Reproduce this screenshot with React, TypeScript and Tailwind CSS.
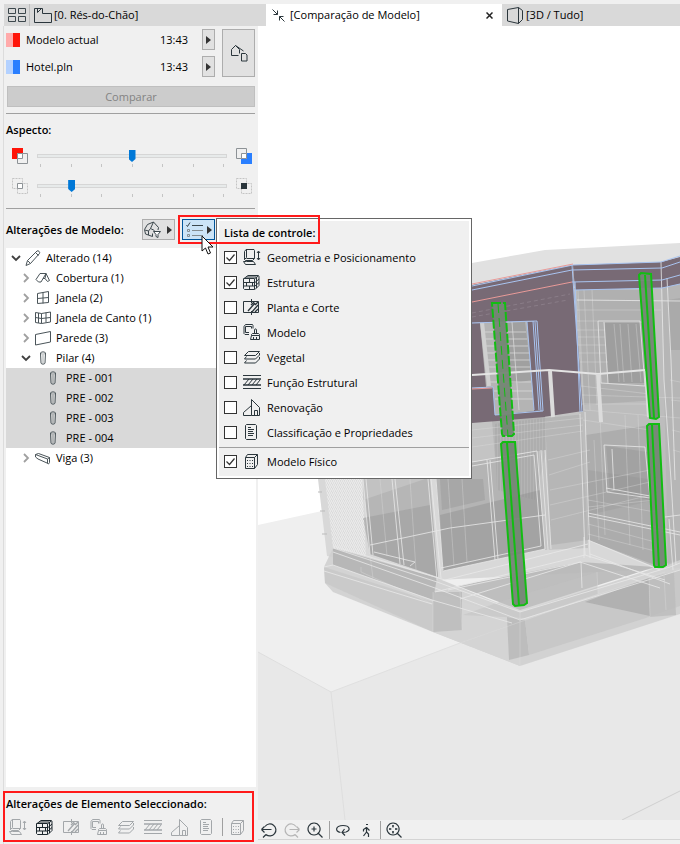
import React, { useState } from "react";
import clsx from "clsx";

type IconProps = { name: string; className?: string };

const icons: Record<string, React.ReactNode> = {
  geometry: (
    <>
      <path d="M1.5 2.5 3 .5h8l.5 1v8l-2 2h-7l-1-1zM3.5.5v8l-2 2M3.5 9.5h8M3.5 12.5h-3l2 3h10l-2-3z" />
      <path d="M15.5 2.5v8M14 4l1.5-2L17 4M14 9l1.5 2L17 9" />
    </>
  ),
  structure: (
    <>
      <path d="M.5 4.500h11v11H1.500l-1-1zM1 4.500l4-3h10l1 1v9l-4 4M12 4.500l4-3" />
      <path d="M1 8.500h11l4-3.500M1 12h11l4-3.500M6.500 4.500v4M3.500 8.500V12M9.500 8.500V12M6.500 12v3.500M3 3h10.500v11" />
    </>
  ),
  plan: (
    <>
      <path d="M8 2.500H.5v11H8M8.500 0v4M8.500 12v4M8 2.500h7.500v11H8" />
      <path d="M5 12l7-8M8 6l3-3M9 13l6-7M12 13l3-3M12 6l3-3" strokeWidth="1.300" />
    </>
  ),
  model: (
    <>
      <path d="M1 2.500 2.500.5h7l.5 1v3M2.500 2.500h6v2M1 2.500v7l1 1h4M2.500 2.500v6H6" />
      <path d="M11.500 9.500V6c0-1.500 2-1.500 2 0v3.500M8.500 11.500v-1l1-1h6l1 1v1zM8.500 11.500l-1 4h9v-4M10.500 13v2.500M13.500 13v2.500" />
    </>
  ),
  layers: (
    <path d="M5.500 2.500h11l-4 4H1.500zM16.500 4v2l-4 4H1.500l2-2.500M16.500 8v2l-4 4H1.500l2-2.500" />
  ),
  hatch: (
    <>
      <path d="M0 1.500h18M0 14.500h18" />
      <path d="M0 5h18M0 11h18" strokeWidth="1.500" />
      <path d="M1 11l5-6M5 11l5-6M9 11l5-6M13 11l4-5" />
    </>
  ),
  renovation: (
    <path d="M8.500 16.500V.5l8 8v8zM8.500 6.500l-8 7v3h8M11.500 16.500v-5h3v5" />
  ),
  document: (
    <path d="M3.500.5h9l1 1v13l-1 1h-9l-1-1v-13zM5 3.500h3M5 5.500h6M5 7.500h5M5 9.500h6M5 11.500h5" />
  ),
  physical: (
    <>
      <path d="M2.500 4.500h9v11h-9zM2.500 4.500l2-3h10l-3 3M14.500 1.500v10l-3 4" />
      <path d="M4 7.500h7M4 10.500h7M4 13.500h7" strokeDasharray="1 1.500" />
    </>
  ),
  pencil: (
    <path d="M1 15.500l1.500-5L12 1c1-1 3.500 1 2.500 2.500L5.500 13.500zM2.500 10.500l3 3M10.500 2.500l3 3" />
  ),
  roof: (
    <path d="M1 9.500l4-6h6L6 12H3.500zM11 3.500l3.500 7-2 1L10 8.500H8M11 3.500l-1 5" />
  ),
  window: <path d="M2.500 3.500l11-2v11l-11 1zM8 2.500v11M2.500 8.500l11-1" />,
  corner: (
    <path d="M.5 2.500l6 1v10l-6-1zM6.500 3.500l9-1.500v10l-9 1.500M3.500 3v10M11 2.500v10M.5 7.500l6 1 9-1" />
  ),
  wall: <path d="M.5 4.500l15-3v10.500l-15 3z" />,
  column: (
    <>
      <path d="M5.500 3c0-1.500 5-1.500 5 0L10 13c0 1.500-4 1.500-4 0z" />
      <path d="M5.500 3c0 1.500 5 1.500 5 0M8 5v8" strokeOpacity=".5" />
    </>
  ),
  beam: (
    <path d="M.5 4.500l3-1 11 4v5l-1 1.500-1.500-1-9-4L.5 7zM.5 4.500l12 4.500 2-1.500M12.500 9v4" />
  ),
};

const Icon = ({ name, className }: IconProps) => (
  <svg
    viewBox="0 0 18 17"
    fill="none"
    stroke="currentColor"
    strokeWidth="1"
    aria-hidden="true"
    className={clsx("h-[17px] w-[18px] shrink-0", className)}
  >
    {icons[name]}
  </svg>
);

const Arrow = () => (
  <svg viewBox="0 0 5 8" className="h-2 w-[5px]" aria-hidden="true">
    <path d="M0 0l5 4-5 4z" fill="#333" />
  </svg>
);

const checks = [
  { label: "Geometria e Posicionamento", icon: "geometry", on: true },
  { label: "Estrutura", icon: "structure", on: true },
  { label: "Planta e Corte", icon: "plan", on: false },
  { label: "Modelo", icon: "model", on: false },
  { label: "Vegetal", icon: "layers", on: false },
  { label: "Função Estrutural", icon: "hatch", on: false },
  { label: "Renovação", icon: "renovation", on: false },
  { label: "Classificação e Propriedades", icon: "document", on: false },
];

const tree = [
  { label: "Alterado (14)", icon: "pencil", level: 0, open: true },
  { label: "Cobertura (1)", icon: "roof", level: 1, open: false },
  { label: "Janela (2)", icon: "window", level: 1, open: false },
  { label: "Janela de Canto (1)", icon: "corner", level: 1, open: false },
  { label: "Parede (3)", icon: "wall", level: 1, open: false },
  { label: "Pilar (4)", icon: "column", level: 1, open: true },
  { label: "PRE - 001", icon: "column", level: 2 },
  { label: "PRE - 002", icon: "column", level: 2 },
  { label: "PRE - 003", icon: "column", level: 2 },
  { label: "PRE - 004", icon: "column", level: 2 },
  { label: "Viga (3)", icon: "beam", level: 1, open: false },
];

const CheckRow = ({ label, icon, on }: { label: string; icon: string; on: boolean }) => {
  const [checked, setChecked] = useState(on);
  return (
    <label className="flex h-[25px] items-center pl-[5px]">
      <span className="relative flex h-[13px] w-[13px]">
        <input
          type="checkbox"
          checked={checked}
          onChange={() => setChecked(!checked)}
          className="h-[13px] w-[13px] appearance-none border border-[#333] bg-white"
        />
        {checked && (
          <svg viewBox="0 0 13 13" className="pointer-events-none absolute inset-0" aria-hidden="true">
            <path d="M2.500 6.500l3 3 5-6" fill="none" stroke="#333" strokeWidth="1.200" />
          </svg>
        )}
      </span>
      <Icon name={icon} className="ml-[6px] text-[#2b363c]" />
      <span className="ml-[6px] whitespace-nowrap">{label}</span>
    </label>
  );
};

const ControlMenu = () => (
  <div className="absolute top-[-1px] left-[34px] z-10 w-[256px] border border-[#666] bg-white p-[2px] text-black">
    <div className="bg-[#f0f0f0] pb-[2px]">
      <h3 className="flex h-6 items-center pl-[5px] font-semibold">Lista de controle:</h3>
      {checks.map((c) => (
        <CheckRow key={c.label} {...c} />
      ))}
      <hr className="mt-[2px] mb-[1px] border-[#a0a0a0]" />
      <CheckRow label="Modelo Físico" icon="physical" on={true} />
    </div>
  </div>
);

const Slider = ({ label, start }: { label: string; start: number }) => (
  <div className="flex-1">
    <input
      type="range"
      aria-label={label}
      min={0}
      max={6}
      defaultValue={start}
      className="block h-3 w-full appearance-none bg-transparent [&::-webkit-slider-runnable-track]:h-1 [&::-webkit-slider-runnable-track]:border [&::-webkit-slider-runnable-track]:border-[#d6d6d6] [&::-webkit-slider-runnable-track]:bg-[#e7eaea] [&::-webkit-slider-thumb]:-mt-[5px] [&::-webkit-slider-thumb]:h-3 [&::-webkit-slider-thumb]:w-[7px] [&::-webkit-slider-thumb]:appearance-none [&::-webkit-slider-thumb]:bg-[#0078d7] [&::-webkit-slider-thumb]:[clip-path:polygon(0_0,100%_0,100%_75%,50%_100%,0_75%)]"
    />
    <div className="mt-[2px] flex justify-between px-[3px]">
      {[0, 1, 2, 3, 4, 5, 6].map((t) => (
        <span key={t} className="h-[3px] w-px bg-[#c4c4c4]" />
      ))}
    </div>
  </div>
);

const Sources = () => (
  <div className="flex gap-[7px] pr-px pl-0">
    <div className="flex flex-1 flex-col gap-[6px]">
      {[
        { name: "Modelo actual", light: "bg-[#ffaaaa]", dark: "bg-[#ff1408]" },
        { name: "Hotel.pln", light: "bg-[#b3d1ff]", dark: "bg-[#2a7fff]" },
      ].map((s) => (
        <div key={s.name} className="flex h-[21px] items-center">
          <span className={clsx("h-[14px] w-[7px]", s.light)} />
          <span className={clsx("h-[14px] w-[7px]", s.dark)} />
          <span className="ml-[6px] flex-1">{s.name}</span>
          <span className="mr-[14px]">13:43</span>
          <button
            aria-label={s.name}
            className="flex h-[21px] w-[13px] items-center justify-center border border-[#adadad] bg-[#e1e1e1]"
          >
            <Arrow />
          </button>
        </div>
      ))}
    </div>
    <button
      aria-label="Modelos"
      className="flex w-[33px] items-center justify-center border border-[#adadad] bg-[#e1e1e1]"
    >
      <svg viewBox="0 0 18 18" className="h-[18px] w-[18px]" fill="none" stroke="#2b363c">
        <path d="M8.500 11.500h-7v-6l4-4 4 4v4M5.500 1.500l8 5.500M11.500 9.500h4l1.500 1.500v6h-5.500z" />
      </svg>
    </button>
  </div>
);

const Aspect = () => (
  <div className="px-[6px] pr-1">
    <div className="flex gap-[9px] pb-[13px]">
      <svg viewBox="0 0 16 16" className="-mt-[2px] h-4 w-4" aria-hidden="true">
        <path d="M0 0h11v11H0z" fill="#ff1408" />
        <path d="M5.500 5.500h10v10h-10z" fill="#f0f0f0" stroke="#8d9296" />
        <path d="M5.500 5.500h5v5h-5z" fill="#fff" stroke="#8d9296" />
      </svg>
      <Slider label="Cor" start={3} />
      <svg viewBox="0 0 16 16" className="-mt-[2px] h-4 w-4" aria-hidden="true">
        <path d="M5 5h11v11H5z" fill="#2a7fff" />
        <path d="M.5.5h10v10H.5z" fill="#f0f0f0" stroke="#8d9296" />
        <path d="M5.500 5.500h5v5h-5z" fill="#fff" stroke="#8d9296" />
      </svg>
    </div>
    <div className="flex gap-[9px]">
      <svg viewBox="0 0 16 16" className="-mt-[2px] h-4 w-4" fill="none" aria-hidden="true">
        <path d="M.5.5h10v10H.5zM5.500 5.500h10v10h-10z" stroke="#c4c4c4" strokeDasharray="2 1" />
        <path d="M5.500 5.500h5v5h-5z" stroke="#8d9296" fill="#fff" />
      </svg>
      <Slider label="Opacidade" start={1} />
      <svg viewBox="0 0 16 16" className="-mt-[2px] h-4 w-4" fill="none" aria-hidden="true">
        <path d="M.5.5h10v10H.5zM5.500 5.500h10v10h-10z" stroke="#c4c4c4" strokeDasharray="2 1" />
        <path d="M5 5h6v6H5z" fill="#2b363c" />
      </svg>
    </div>
  </div>
);

const Cursor = () => (
  <svg
    viewBox="0 0 13 20"
    className="pointer-events-none absolute top-[16px] left-[19px] z-30 h-5 w-[13px]"
    aria-hidden="true"
  >
    <path d="M1 1v15l3.500-3 2.500 6 2.500-1-2.500-6h5z" fill="#fff" stroke="#111" />
  </svg>
);

const ChangesHeader = () => (
  <div className="flex h-[21px] items-center">
    <h2 className="flex-1 font-semibold whitespace-nowrap">Alterações de Modelo:</h2>
    <button
      aria-label="Filtro"
      className="flex h-[21px] w-[33px] items-center justify-between border border-[#adadad] bg-[#e1e1e1] pr-[2px] pl-px"
    >
      <svg viewBox="0 0 18 18" className="h-[18px] w-[18px]" fill="none" stroke="#3c474c">
        <path d="M.5 8.500l3-5 6-2.500 5 5.500-.5 2.500M.5 8.500L1.500 13l7 2.500v-3M1 9l3.500 1 2-2.500L9.500 1M4.500 10v4M6.500 7.500l4 2" />
        <path d="M9.500 10.500h7l-2.500 3v3l-2-1v-2z" fill="#fff" />
      </svg>
      <Arrow />
    </button>
    <div className="relative mr-[41px] ml-[7px]">
      <button
        aria-label="Lista de controle"
        className="flex h-[21px] w-[33px] items-center justify-between border border-[#005499] bg-[#cce4f7] pr-[2px] pl-[3px]"
      >
        <svg viewBox="0 0 17 16" className="h-4 w-[17px]" fill="none" stroke="#3c474c">
          <path d="M.5 3l1 1.500L4 .5M6 3.500h11" />
          <path d="M6 8.500h11M6 13.500h11M1.500 7.500h2v2h-2zM1.500 12.500h2v2h-2z" stroke="#858d91" />
        </svg>
        <Arrow />
      </button>
      <ControlMenu />
      <div className="pointer-events-none absolute -top-1 -left-1 z-20 h-[29px] w-[142px] border-2 border-[#ff1a1a]" />
      <Cursor />
    </div>
  </div>
);

const Chevron = ({ open }: { open?: boolean }) => (
  <svg viewBox="0 0 10 10" className="h-[10px] w-[10px]" fill="none" aria-hidden="true">
    {open ? (
      <path d="M1 3l4 4 4-4" stroke="#404040" strokeWidth="1.800" />
    ) : (
      <path d="M3 1l4 4-4 4" stroke="#a0a0a0" strokeWidth="1.800" />
    )}
  </svg>
);

const Tree = () => (
  <ul className="flex-1 bg-white">
    {tree.map((row) => (
      <li
        key={row.label}
        className={clsx(
          "flex h-5 items-center",
          row.level === 0 && "pl-[5px]",
          row.level === 1 && "pl-[15px]",
          row.level === 2 && "bg-[#d9d9d9] pl-[39px]"
        )}
      >
        {row.level < 2 && (
          <button aria-label={row.label} className="mr-1">
            <Chevron open={row.open} />
          </button>
        )}
        <Icon name={row.icon} className="text-[#4a5459]" />
        <span className="ml-[3px]">{row.label}</span>
      </li>
    ))}
  </ul>
);

const SelectedChanges = () => (
  <div className="relative h-[57px] pt-[9px]">
    <h2 className="leading-4 font-semibold whitespace-nowrap">Alterações de Elemento Seleccionado:</h2>
    <div className="mt-[6px] flex items-center gap-[9px] pl-[3px]">
      {checks.map((c) => (
        <button key={c.label} aria-label={c.label}>
          <Icon name={c.icon} className={c.icon === "structure" ? "text-[#1c272d]" : "text-[#a3a7aa]"} />
        </button>
      ))}
      <span className="-mx-[3px] h-[18px] w-px bg-[#a0a0a0]" />
      <button aria-label="Modelo Físico">
        <Icon name="physical" className="text-[#a3a7aa]" />
      </button>
    </div>
    <div className="pointer-events-none absolute top-1 right-[2px] bottom-[2px] -left-[3px] border-2 border-[#ff1a1a]" />
  </div>
);

// [points, fill, opacity]
const faces: [string, string, number][] = [
  ["258,525 322,511 680,500 680,700 258,700", "#efefef", 1],
  ["258,652 331,692 460,643 550,611 680,572 680,820 258,820", "#e8e8e8", 1],
  ["472,263 545,250 680,243 680,268 573,290 472,300", "#e1e1e1", 1],
  ["318,479 400,400 472,400 680,280 680,568 437,580 327,556", "#d8d8d8", 1],
  ["324,567 333,548 437,578 520,612 680,560 680,614 520,666 433,632 333,592 325,583", "#cfcfcf", 0.9],
  ["333,548 437,578 433,600 333,565", "#b0b0b0", 0.8],
  ["324,567 433,602 433,632 325,583", "#c5c5c5", 0.6],
  ["433,592 520,620 520,666 433,632", "#d4d4d4", 0.9],
  ["433,592 462,592 462,630 433,632", "#aaaaaa", 0.5],
  ["507,617 525,620 529,655 509,660", "#b4b4b4", 0.7],
  ["525,620 649,578 680,570 680,606 649,617 529,655", "#c6c6c6", 0.8],
  ["585,602 649,578 650,616", "#999999", 0.5],
  ["649,578 674,572 676,615 650,617", "#bbbbbb", 0.8],
  ["458,586 580,562 655,567 520,610", "#b8b8b8", 0.9],
  ["463,615 505,600 597,572 598,594 525,618", "#c1c1c1", 0.5],
  ["325,479 362,479 366,556 333,548", "#dadada", 1],
  ["363,479 430,479 438,577 370,554", "#b6b6b6", 1],
  ["363,518 430,505 438,577 370,554", "#9f9f9f", 0.6],
  ["363,500 425,479 392,479 363,479", "#c7c7c7", 0.7],
  ["435,470 472,462 537,451 545,549 443,571", "#b4b4b4", 1],
  ["440,515 540,490 545,549 443,571", "#999999", 0.65],
  ["440,479 483,479 485,500 442,510", "#999999", 0.5],
  ["472,420 583,411 588,548 545,550 537,451 472,462", "#c4c4c4", 1],
  ["492,420 545,414 546,450 495,457", "#a8a8a8", 0.5],
  ["545,418 586,414 588,540 551,545", "#b0b0b0", 0.7],
  ["574,288 662,285 680,282 680,560 655,567 588,540", "#bdbdbd", 1],
  ["577,290 648,290 657,400 584,405", "#adadad", 0.8],
  ["605,323 642,323 648,383 608,383", "#8b8b8b", 0.5],
  ["586,435 650,425 655,500 588,515", "#999999", 0.45],
  ["588,470 655,480 655,565 588,540", "#a0a0a0", 0.6],
  ["606,446 648,452 651,500 610,492", "#858585", 0.25],
  ["662,286 680,283 680,560 668,565", "#b4b4b4", 0.7],
  ["668,300 680,298 680,350 670,350", "#909090", 0.3],
];

const purple = [
  "472,285 573,265 574,290 583,411 543,417 537,321 472,323",
  "472,388 493,387 495,415 545,410 545,417 472,423",
  "573,265 661,262 680,257 680,284 662,288 575,290",
];

const whiteLines = [
  "598,321 640,321 645,386 601,383 598,321",
  "604,322 608,383",
  "661,262 664,380 671,480 676,565",
  "667,278 671,360 675,480",
  "577,300 680,301",
  "585,412 590,558",
  "580,414 585,555",
  "363,479 370,554",
  "366,479 373,555",
  "392,479 400,564",
  "395,479 404,565",
  "428,479 437,580",
  "431,479 441,578",
  "436,479 443,570",
  "472,462 537,451 545,549 443,571",
  "472,466 534,455 541,546 441,568",
  "541,450 548,550",
  "545,450 551,549",
  "487,460 495,560",
  "490,460 498,559",
  "333,548 437,582 520,612 670,567 680,563",
  "333,552 435,588 520,620 680,570",
  "333,546 370,557 445,580 588,544",
  "324,567 333,565 432,600 512,623",
  "324,571 432,604",
  "435,592 585,555 665,580",
  "448,590 581,562 582,588",
  "460,599 580,562 660,588",
  "588,540 660,570",
  "590,554 670,584",
  "588,513 680,532",
  "588,516 680,535",
  "604,445 645,447 650,498 607,492 604,445",
  "612,449 614,490",
  "606,488 650,496",
  "665,517 680,515",
  "669,519 673,570",
  "584,537 584,558",
  "370,545 450,528 545,515",
  "374,552 415,562 410,566",
];

const faintLines = [
  "460,643 520,622 587,598 665,572",
  "433,592 433,632",
  "460,592 462,630",
  "520,610 520,666",
  "588,534 655,551",
  "577,310 661,310",
  "577,321 598,321",
  "577,330 605,330",
  "578,337 605,337",
  "578,345 606,345",
  "579,353 606,353",
  "580,362 608,362",
  "581,386 650,394",
  "582,395 680,398",
  "582,404 650,404",
  "584,410 680,418",
  "583,420 650,430",
  "472,430 583,418",
  "472,438 583,425",
  "472,447 583,431",
  "548,460 590,450",
  "549,475 590,462",
  "550,490 650,470",
  "550,505 650,482",
  "551,520 650,495",
  "588,500 655,512",
  "588,507 655,500",
  "588,524 655,542",
  "594,440 599,540",
  "578,290 584,410",
  "584,290 590,410",
  "592,290 597,405",
  "614,324 619,382",
  "620,324 624,382",
  "628,324 632,382",
  "636,324 641,382",
  "380,479 387,556",
  "410,479 416,570",
  "448,479 454,566",
  "462,479 467,562",
  "600,415 605,535",
  "625,415 630,545",
  "638,415 643,550",
  "670,380 680,382",
  "671,400 680,401",
  "672,430 680,432",
  "673,450 680,452",
  "361,567 361,572 433,604",
  "370,555 373,578",
  "597,572 598,594",
  "649,578 650,617",
  "664,576 666,610",
];

const columns = [
  { outline: "492,303 505,303 514,434 512,436 503,436 502,434", core: "498,304 508,436", dashed: true },
  { outline: "501,444 503,442 515,442 527,603 524,605 515,606 513,604", core: "507,443 519,605", dashed: false },
  { outline: "639,275 641,273 651,274 659,417 656,419 650,418", core: "645,275 654,418", dashed: false },
  { outline: "647,426 649,424 659,424 666,565 663,567 655,567 654,565", core: "652,425 659,567", dashed: false },
];

const Model3D = () => (
  <svg
    viewBox="258 26 422 794"
    preserveAspectRatio="xMinYMin slice"
    className="min-h-0 w-full flex-1 bg-white"
    fill="none"
    role="img"
    aria-label="Modelo 3D"
  >
    <defs>
      <pattern id="mesh" width="4" height="4" patternUnits="userSpaceOnUse">
        <path d="M0 4l2-4M2 4l2-4" stroke="#eee" />
      </pattern>
      <pattern id="slats" width="3" height="6" patternUnits="userSpaceOnUse">
        <path d="M1 0v6" stroke="#8a8a8a" strokeOpacity=".35" />
      </pattern>
    </defs>
    {faces.map(([points, fill, opacity]) => (
      <polygon key={points + fill} points={points} fill={fill} fillOpacity={opacity} />
    ))}
    <polygon points="325,479 362,479 366,556 333,548" fill="url(#mesh)" />
    <polygon points="494,424 545,418 546,450 535,500 497,490" fill="url(#slats)" />
    <polygon points="472,323 537,321 543,411 495,415 493,387 472,388" fill="#b4b4b4" />
    <polygon points="472,323 480,323 486,387 472,388" fill="#786a75" />
    <polygon points="505,323 525,322 532,380 508,384" fill="#979797" fillOpacity=".7" />
    <path
      d="M482 332h44M483 339h44M484 346h44M485 353h44M486 360h44M487 367h44M487 382h44M494 391h38M495 399h38M512 322l7 88"
      stroke="#dedede"
      strokeOpacity=".7"
    />
    <path d="M482 322l7 64" stroke="#d0d0d0" strokeWidth="4" />
    {purple.map((points) => (
      <polygon key={points} points={points} fill="#786a75" />
    ))}
    <polygon points="527,322 537,321 543,410 534,411" fill="#786a75" />
    <g stroke="#dfdfdf" strokeOpacity=".35">
      {faintLines.map((points) => (
        <polyline key={points} points={points} />
      ))}
    </g>
    <g stroke="#e8e8e8" strokeOpacity=".8">
      {whiteLines.map((points) => (
        <polyline key={points} points={points} />
      ))}
    </g>
    <path
      d="M472 290l100-20 90-2 18-6M472 286l101-21 88-3 19-6M572 282l90-2 18-5M575 290l87-2 18-4M572 265l10 147M575 282l5 130M472 323l65-2 6 90-48 4-2-28-21 1M527 322l7 88M533 321l6 89M535 322l6 89"
      stroke="#a9c4f0"
    />
    <path d="M472 284l101-20M472 302l100-20M472 389l20-1" stroke="#e89a98" />
    <path d="M472 313l98-19M472 317l96-17" stroke="#8a7d88" strokeDasharray="4 3" />
    <path d="M472 375l77-5 49 4 47-4" stroke="#e4e4e4" strokeWidth="2" />
    <path d="M550 371l3 46M598 374l3 48M646 371l3 46" stroke="#dcdcdc" strokeWidth="4" />
    {columns.map((c) => (
      <g key={c.core} stroke="#12bd12">
        <polygon points={c.outline} fill="#748674" fillOpacity=".95" strokeWidth="2" strokeDasharray={c.dashed ? "9 2" : undefined} />
        <polyline points={c.core} strokeWidth={c.dashed ? 1 : 2} strokeDasharray={c.dashed ? "9 5" : undefined} />
      </g>
    ))}
    <path d="M331 692l129-49" stroke="#e0e0e0" />
    <path d="M331 692l14 128M258 652l73 40" stroke="#dedede" />
    <path d="M622 820l58-29" stroke="#cfcfcf" />
    <path d="M318 492h4M320 511h5M322 534h5" stroke="#bbb" />
  </svg>
);

const navTools = [
  { label: "Vista anterior", d: "M4 4.500a6 6 0 1 1 1 8M.5 7.500h10M.5 7.500l3-3M.5 7.500l3 3M5 12.500L2 15.500" },
  { label: "Vista seguinte", off: true, d: "M12 4.500a6 6 0 1 0-1 8M15.500 7.500h-10M15.500 7.500l-3-3M15.500 7.500l-3 3M11 12.500l3 3" },
  { label: "Zoom", d: "M7 1a6 6 0 1 0 .1 0zM7 4.500v5M4.500 7h5M11.500 11.500l4 4" },
  { label: "Órbita", d: "M5.500 10.500C-.5 9.500.5 3.500 8 3.500c7 0 8 5 3 6.500l-3.500.5M9.500 7l-2.500 3.500 3 3" },
  { label: "Passear", d: "M8 2.500h2M8.500 5v5M8.500 5.500l-3 2v2M8.500 5.500l3 3M8.500 10l-3 4M8.500 10l2 2v3" },
  { label: "Ajustar", d: "M7 1a6 6 0 1 0 .1 0zM7 3v2.500M7 9v2.500M3 7h2.500M9 7h2.500M6 4h2M6 10h2M4 6v2M10 6v2M11.500 11.500l4 4" },
];

const Viewport = () => (
  <main className="flex min-w-0 flex-1 flex-col">
    <Model3D />
    <div className="flex h-[19px] items-center pl-[3px]">
      {navTools.map((t, i) => (
        <React.Fragment key={t.label}>
          {(i === 3 || i === 5) && <span className="mr-[5px] -ml-px h-[18px] w-px bg-[#a0a0a0]" />}
          <button aria-label={t.label} className={clsx("w-[23px]", t.off ? "text-[#b5b5b5]" : "text-[#2b363c]")}>
            <svg viewBox="0 0 16 16" className="h-4 w-4" fill="none" stroke="currentColor" strokeWidth="1.200">
              <path d={t.d} />
            </svg>
          </button>
        </React.Fragment>
      ))}
    </div>
    <div className="h-[5px] border-t border-[#d4d4d4]" />
  </main>
);

const Tabs = () => (
  <nav className="ml-1 flex h-[22px] shrink-0 bg-[#d9d9d9]">
    <button aria-label="Separadores" className="flex w-[26px] items-center justify-center border-r border-[#bdbdbd]">
      <svg viewBox="0 0 18 14" className="h-[14px] w-[18px]" fill="none" stroke="#3c474c">
        <path d="M.5.5h7v5h-7zM10.500.5h7v5h-7zM.5 8.500h7v5h-7zM10.500 8.500h7v5h-7z" />
      </svg>
    </button>
    <button className="flex w-[236px] items-center pl-1">
      <svg viewBox="0 0 18 15" className="h-[15px] w-[18px]" fill="none" stroke="#2b363c">
        <path d="M.5.5h8v5h9v9H.5zM3.500.5v4l4-4" />
      </svg>
      <span className="ml-[2px]">[0. Rés-do-Chão]</span>
    </button>
    <div className="flex w-[236px] items-center bg-white pl-[6px]">
      <svg viewBox="0 0 13 13" className="h-[13px] w-[13px]" fill="none" stroke="#2b363c">
        <path d="M.5.5l5 5M5.500 1.500v4h-4M12.500 12.500l-5-5M7.500 11.500v-4h4" />
      </svg>
      <button className="ml-[5px] flex-1 text-left">[Comparação de Modelo]</button>
      <button aria-label="Fechar" className="mr-[9px]">
        <svg viewBox="0 0 7 7" className="h-[7px] w-[7px]" stroke="#222" strokeWidth="1.500">
          <path d="M.5.5l6 6M6.500.5l-6 6" />
        </svg>
      </button>
    </div>
    <button className="flex flex-1 items-center pl-[5px]">
      <svg viewBox="0 0 16 17" className="h-[17px] w-4" fill="none" stroke="#2b363c">
        <path d="M.5 2.500l11-2 4 3v9l-4 4-11-2.500zM11.500.5v16" />
      </svg>
      <span className="ml-[3px]">[3D / Tudo]</span>
    </button>
  </nav>
);

export default function App() {
  return (
    <div className="flex h-screen flex-col bg-[#f0f0f0] pt-1 font-['Open_Sans',sans-serif] text-[11px] leading-4 text-black">
      <Tabs />
      <div className="flex min-h-0 flex-1">
        <aside className="ml-[3px] flex w-[255px] shrink-0 flex-col border-l border-[#dcdcdc] pr-[2px] pl-[2px]">
          <div className="pt-[3px]">
            <Sources />
            <button
              disabled
              className="mt-[9px] ml-px block h-[21px] w-[248px] border border-[#bfbfbf] bg-[#cccccc] leading-[19px] text-[#838383]"
            >
              Comparar
            </button>
            <hr className="mt-[6px] mr-px border-[#a0a0a0]" />
            <h2 className="mt-2 mb-3 font-semibold">Aspecto:</h2>
            <Aspect />
            <hr className="mt-[11px] mr-px mb-[10px] border-[#a0a0a0]" />
            <ChangesHeader />
          </div>
          <div className="mt-2 flex flex-1 flex-col">
            <Tree />
          </div>
          <SelectedChanges />
        </aside>
        <Viewport />
      </div>
    </div>
  );
}
